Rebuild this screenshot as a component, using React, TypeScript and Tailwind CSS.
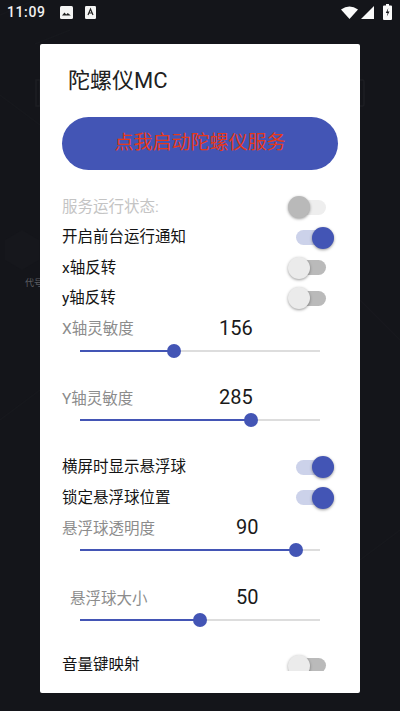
const cjk = "font-['Roboto','Noto_Sans_CJK_SC',sans-serif]";

function Toggle({ on, disabled }: { on?: boolean; disabled?: boolean }) {
  const track = on ? "ml-2 bg-[#ccd2ea]" : disabled ? "ml-1 mr-2 bg-[#eeeeee]" : "ml-1 mr-2 bg-[#bababa]";
  const thumb = on ? "right-0 bg-[#4355b5]" : disabled ? "left-0 bg-[#b9b9b9]" : "left-0 bg-[#ebebeb]";
  return (
    <div className="relative flex h-[22px] w-[46px] shrink-0 items-center">
      <div className={`h-[15px] flex-1 rounded-full ${track}`} />
      <div className={`absolute top-0 h-[22px] w-[22px] rounded-full shadow-[0_1px_3px_rgba(0,0,0,0.4)] ${thumb}`} />
    </div>
  );
}

function ToggleRow({ label, on, disabled }: { label: string; on?: boolean; disabled?: boolean }) {
  return (
    <div className="flex h-[30.4px] items-center justify-between pl-[22px] pr-[26px]">
      <span className={`pt-[1px] text-[15.500px] ${disabled ? "text-[#c4c4c4]" : "text-[#141414]"}`}>{label}</span>
      <Toggle on={on} disabled={disabled} />
    </div>
  );
}

function SliderBlock({
  label,
  value,
  pct,
  valueLeft,
  labelLeft = "pl-[22px]",
}: {
  label: string;
  value: number;
  pct: number;
  valueLeft: string;
  labelLeft?: string;
}) {
  return (
    <div className="flex h-[69.500px] flex-col">
      <div className="relative flex h-[30px] items-center">
        <span className={`pt-[3px] text-[15.500px] text-[#8c8c8c] ${labelLeft}`}>{label}</span>
        <span className={`absolute -top-[1px] text-[20px] text-[#1a1a1a] ${valueLeft}`}>{value}</span>
      </div>
      <div className="mx-10 flex h-[14px] items-center">
        <div className="relative h-[2px] w-full bg-[#dddddd]">
          <div className="h-full bg-[#4355b5]" style={{ width: `${pct}%` }} />
          <div
            className="absolute -top-[6px] -ml-[7px] h-[14px] w-[14px] rounded-full bg-[#4355b5]"
            style={{ left: `${pct}%` }}
          />
        </div>
      </div>
    </div>
  );
}

export default function App() {
  return (
    <div className={`relative h-[711px] w-[400px] overflow-hidden bg-[#14151a] ${cjk}`}>
      {/* faint launcher behind the dialog */}
      <svg className="absolute left-0 top-0" width="400" height="711" fill="none" stroke="#17181d" strokeWidth="1.500">
        <path d="M5 240l17-10 17 10v20l-17 10-17-10z" fill="#16171c" stroke="none" />
        <path d="M0 15l35-15M70 30l-35 14" />
        <path d="M36 80h4v26h-4zM360 80h3q1 0 1 2v22q0 2-1 2h-3" stroke="#1d1e23" />
        <path d="M0 95l40 30M360 300l40 40M0 420l40-30M360 560l40-30" />
      </svg>
      <span className="absolute left-[25px] top-[277px] text-[9px] text-[#5c5d62]">代号</span>

      <div className="relative flex h-[24px] items-center px-[7px]">
        <span className="w-[46px] text-[14px] font-medium tracking-[0.600px] text-[#f0f0f0]">11:09</span>
        <svg className="ml-[7px]" width="13" height="13" viewBox="0 0 13 13">
          <rect width="13" height="13" rx="1.500" fill="#f4f4f4" />
          <path d="M2 9.500l2.500-3 1.700 2 1.600-1.500 3 2.500z" fill="#222" />
        </svg>
        <svg className="ml-[12px]" width="11" height="13" viewBox="0 0 11 13">
          <rect width="11" height="13" rx="1.200" fill="#f4f4f4" />
          <path d="M3 9l2.500-6 2.500 6M3.900 7h3.200" stroke="#222" strokeWidth="1.200" fill="none" />
        </svg>
        <div className="ml-auto flex items-center">
          <svg width="17" height="13" viewBox="0 0 17 13">
            <path d="M0 3.500Q8.500-2.500 17 3.500L8.500 13z" fill="#fafafa" />
          </svg>
          <svg className="ml-[3px]" width="13" height="13" viewBox="0 0 13 13">
            <path d="M13 0v13H0z" fill="#fafafa" />
          </svg>
          <svg className="ml-[9px] mr-[1px]" width="9" height="16" viewBox="0 0 9 16">
            <path d="M3 0h3v1.500h2a1 1 0 0 1 1 1V15a1 1 0 0 1-1 1H1a1 1 0 0 1-1-1V2.500a1 1 0 0 1 1-1h2z" fill="#fafafa" />
            <path d="M5.300 4L2.800 9h1.800l-.8 3.500L6.500 7.500H4.600z" fill="#14151a" />
          </svg>
        </div>
      </div>

      <div className="relative ml-10 mt-5 flex h-[649px] w-[320px] flex-col overflow-hidden rounded-[2px] bg-white">
        <div className="flex h-[73px] items-center pl-[28px] text-[22px] text-[#212121]">陀螺仪MC</div>
        <div className="mx-[22px] flex h-[53px] items-center justify-center rounded-[27px] bg-[#4355b5] text-[19px] text-[#e5391a]">
          点我启动陀螺仪服务
        </div>
        <div className="mt-[22px] h-[479px] overflow-hidden">
          <ToggleRow label="服务运行状态:" disabled />
          <ToggleRow label="开启前台运行通知" on />
          <ToggleRow label="x轴反转" />
          <ToggleRow label="y轴反转" />
          <SliderBlock label="X轴灵敏度" value={156} pct={39} valueLeft="left-[179px]" />
          <SliderBlock label="Y轴灵敏度" value={285} pct={71.300} valueLeft="left-[179px]" />
          <div className="-mt-[0.500px]">
            <ToggleRow label="横屏时显示悬浮球" on />
            <ToggleRow label="锁定悬浮球位置" on />
          </div>
          <div className="mt-[0.500px]">
            <SliderBlock label="悬浮球透明度" value={90} pct={90} valueLeft="left-[196px]" />
            <SliderBlock label="悬浮球大小" value={50} pct={50} valueLeft="left-[196px]" labelLeft="pl-[30px]" />
          </div>
          <div className="-mt-[2px]">
            <ToggleRow label="音量键映射" />
          </div>
        </div>
      </div>
    </div>
  );
}
